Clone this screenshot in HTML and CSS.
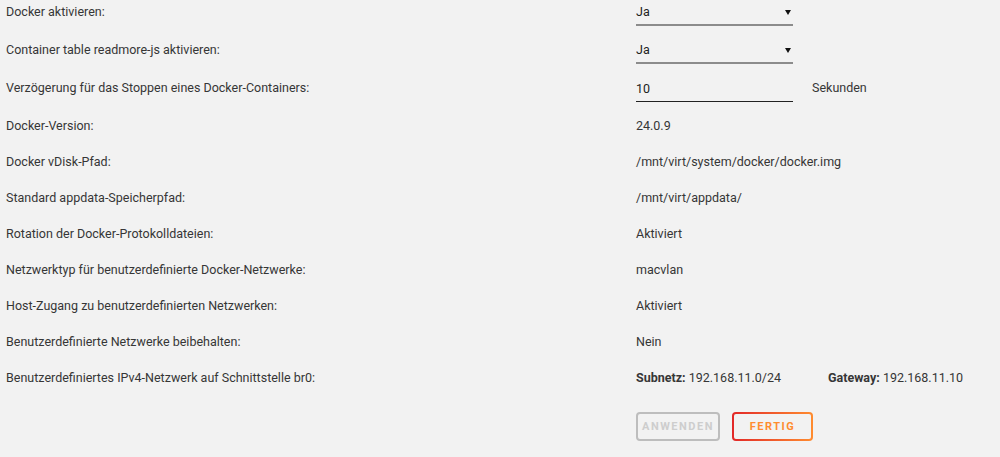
FILE: index.html
```html
<!DOCTYPE html>
<html lang="de">

<head>
    <meta charset="UTF-8">
    <meta name="viewport" content="width=device-width, initial-scale=1.0">
    <title>Docker Einstellungen</title>
    <link rel="stylesheet" href="styles.css">
</head>

<body>
    <form class="settings">
        <div class="row tall">
            <div class="label">Docker aktivieren:</div>
            <div class="value">
                <div class="select">
                    <select name="enable">
                        <option>Ja</option>
                        <option>Nein</option>
                    </select>
                </div>
            </div>
        </div>
        <div class="row tall">
            <div class="label">Container table readmore-js aktivieren:</div>
            <div class="value">
                <div class="select">
                    <select name="readmore">
                        <option>Ja</option>
                        <option>Nein</option>
                    </select>
                </div>
            </div>
        </div>
        <div class="row tall">
            <div class="label">Verzögerung für das Stoppen eines Docker-Containers:</div>
            <div class="value">
                <input type="text" class="field" name="timeout" value="10">
                <span class="unit">Sekunden</span>
            </div>
        </div>
        <div class="row">
            <div class="label">Docker-Version:</div>
            <div class="value">24.0.9</div>
        </div>
        <div class="row">
            <div class="label">Docker vDisk-Pfad:</div>
            <div class="value">/mnt/virt/system/docker/docker.img</div>
        </div>
        <div class="row">
            <div class="label">Standard appdata-Speicherpfad:</div>
            <div class="value">/mnt/virt/appdata/</div>
        </div>
        <div class="row">
            <div class="label">Rotation der Docker-Protokolldateien:</div>
            <div class="value">Aktiviert</div>
        </div>
        <div class="row">
            <div class="label">Netzwerktyp für benutzerdefinierte Docker-Netzwerke:</div>
            <div class="value">macvlan</div>
        </div>
        <div class="row">
            <div class="label">Host-Zugang zu benutzerdefinierten Netzwerken:</div>
            <div class="value">Aktiviert</div>
        </div>
        <div class="row">
            <div class="label">Benutzerdefinierte Netzwerke beibehalten:</div>
            <div class="value">Nein</div>
        </div>
        <div class="row">
            <div class="label">Benutzerdefiniertes IPv4-Netzwerk auf Schnittstelle br0:</div>
            <div class="value">
                <span class="net"><b>Subnetz:</b> 192.168.11.0/24</span>
                <span><b>Gateway:</b> 192.168.11.10</span>
            </div>
        </div>
        <div class="row buttons">
            <div class="label"></div>
            <div class="value">
                <button type="button" class="btn" disabled>Anwenden</button>
                <button type="button" class="btn done">Fertig</button>
            </div>
        </div>
    </form>
</body>

</html>
```

FILE: styles.css
```css
* {
    margin: 0;
    padding: 0;
    box-sizing: border-box;
}

body {
    background-color: #f2f2f2;
    color: #363636;
    font-family: Roboto, "Noto Sans", sans-serif;
    font-size: 12.5px;
}

.settings {
    padding: 0 0 0 6px;
}

.row {
    display: grid;
    grid-template-columns: 630px auto;
    height: 36px;
    line-height: 24px;
}

.row.tall {
    height: 38px;
}

.value {
    display: flex;
    align-items: flex-start;
}

.select {
    position: relative;
    width: 157px;
}

.select select {
    appearance: none;
    width: 100%;
    height: 26px;
    border: none;
    border-bottom: 2px solid #8c8c8c;
    background: transparent;
    font: inherit;
    color: #222;
    outline: none;
    cursor: pointer;
}

.select::after {
    content: "";
    position: absolute;
    top: 10px;
    right: 2px;
    border-left: 3px solid transparent;
    border-right: 3px solid transparent;
    border-top: 5px solid #111;
    pointer-events: none;
}

.field {
    width: 157px;
    height: 26px;
    border: none;
    border-bottom: 1px solid #222;
    background: transparent;
    font: inherit;
    color: #222;
    outline: none;
}

.unit {
    margin-left: 19px;
}

.net {
    width: 192px;
}

.value b {
    font-weight: 700;
}

.buttons {
    height: auto;
    padding-top: 10px;
}

.btn {
    width: 84px;
    height: 29px;
    margin-right: 12px;
    border: 2px solid #bdbdbd;
    border-radius: 4px;
    background-color: #f2f2f2;
    color: #cdcdcd;
    font-family: inherit;
    font-size: 11px;
    font-weight: 700;
    letter-spacing: 1.5px;
    text-transform: uppercase;
}

.btn.done {
    width: 81px;
    border: 2px solid transparent;
    background: linear-gradient(#f2f2f2, #f2f2f2) padding-box,
        linear-gradient(90deg, #e22828, #ff8c2f) border-box;
    color: #ff8c2f;
    cursor: pointer;
}
```
